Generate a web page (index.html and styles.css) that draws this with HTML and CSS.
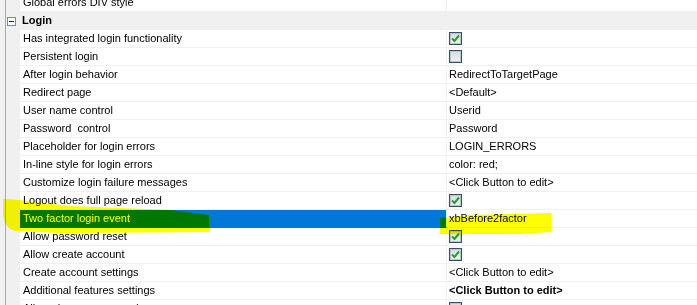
FILE: index.html
```html
<!DOCTYPE html>
<html lang="en">
<head>
  <meta charset="UTF-8">
  <title>Properties - Login</title>
  <link rel="stylesheet" href="styles.css">
</head>
<body>

  <div class="grid">
    <div class="row">
      <div class="gutter"></div>
      <div class="name">Global errors DIV style</div>
      <div class="value"></div>
    </div>

    <div class="row category">
      <div class="gutter"><span class="toggle"></span></div>
      <div class="name">Login</div>
      <div class="value"></div>
    </div>

    <div class="row">
      <div class="gutter"></div>
      <div class="name">Has integrated login functionality</div>
      <div class="value"><span class="check on"></span></div>
    </div>
    <div class="row">
      <div class="gutter"></div>
      <div class="name">Persistent login</div>
      <div class="value"><span class="check"></span></div>
    </div>
    <div class="row">
      <div class="gutter"></div>
      <div class="name">After login behavior</div>
      <div class="value">RedirectToTargetPage</div>
    </div>
    <div class="row">
      <div class="gutter"></div>
      <div class="name">Redirect page</div>
      <div class="value">&lt;Default&gt;</div>
    </div>
    <div class="row">
      <div class="gutter"></div>
      <div class="name">User name control</div>
      <div class="value">Userid</div>
    </div>
    <div class="row">
      <div class="gutter"></div>
      <div class="name">Password&nbsp; control</div>
      <div class="value">Password</div>
    </div>
    <div class="row">
      <div class="gutter"></div>
      <div class="name">Placeholder for login errors</div>
      <div class="value">LOGIN_ERRORS</div>
    </div>
    <div class="row">
      <div class="gutter"></div>
      <div class="name">In-line style for login errors</div>
      <div class="value">color: red;</div>
    </div>
    <div class="row">
      <div class="gutter"></div>
      <div class="name">Customize login failure messages</div>
      <div class="value">&lt;Click Button to edit&gt;</div>
    </div>
    <div class="row">
      <div class="gutter"></div>
      <div class="name">Logout does full page reload</div>
      <div class="value"><span class="check on"></span></div>
    </div>
    <div class="row selected">
      <div class="gutter"></div>
      <div class="name">Two factor login event</div>
      <div class="value">xbBefore2factor</div>
    </div>
    <div class="row">
      <div class="gutter"></div>
      <div class="name">Allow password reset</div>
      <div class="value"><span class="check on"></span></div>
    </div>
    <div class="row">
      <div class="gutter"></div>
      <div class="name">Allow create account</div>
      <div class="value"><span class="check on"></span></div>
    </div>
    <div class="row">
      <div class="gutter"></div>
      <div class="name">Create account settings</div>
      <div class="value">&lt;Click Button to edit&gt;</div>
    </div>
    <div class="row">
      <div class="gutter"></div>
      <div class="name">Additional features settings</div>
      <div class="value bold">&lt;Click Button to edit&gt;</div>
    </div>
    <div class="row">
      <div class="gutter"></div>
      <div class="name">Allow change password</div>
      <div class="value"><span class="check"></span></div>
    </div>
  </div>

  <!-- highlighter marks drawn over the grid -->
  <svg class="marker" width="697" height="305" viewBox="0 0 697 305">
    <path d="M3 199 C20 199 40 203 70 206 L170 210 L209 215 L209 232 L60 233 L15 231 C8 229 4 224 3 214 Z"/>
    <path d="M440 218 L470 215 L551 213 L551 232 L520 234 L440 234 Z"/>
  </svg>

</body>
</html>
```

FILE: styles.css
```css
:root {
  --line: #f0f0f0;
  --gutter-line: #a9a9a9;
  --select: #0078d7;
  --text: #000000;
}

body {
  margin: 0;
  font-family: "Liberation Sans", Arial, sans-serif;
  font-size: 11px;
  color: var(--text);
  background: #ffffff;
  overflow: hidden;
  width: 697px;
  height: 305px;
}

.grid {
  margin-top: -6px;
  background:
    linear-gradient(to right, var(--line) 5px, var(--gutter-line) 5px, var(--gutter-line) 6px, var(--line) 6px) 0 0 / 20px 100% no-repeat;
}

.row {
  display: flex;
  height: 18px;
}

.gutter {
  flex: 0 0 20px;
  display: flex;
  align-items: center;
}

.name,
.value {
  box-sizing: border-box;
  height: 18px;
  line-height: 17px;
  border-bottom: 1px solid var(--line);
  white-space: nowrap;
  overflow: hidden;
}

.name {
  flex: 0 0 427px;
  padding-left: 3px;
  border-right: 1px solid var(--line);
}

.value {
  flex: 1;
  padding-left: 2px;
}

.value.bold {
  font-weight: bold;
}

.category .name,
.category .value {
  background: var(--line);
  font-weight: bold;
  padding-left: 2px;
  border-right: none;
}

.toggle {
  box-sizing: border-box;
  width: 9px;
  height: 9px;
  margin: 1px 0 0 7px;
  border: 1px solid #7a8da3;
  background: #ffffff;
  position: relative;
}

.toggle::after {
  content: "";
  position: absolute;
  left: 1px;
  top: 3px;
  width: 5px;
  height: 1px;
  background: #1c2b3a;
}

.selected .name {
  background: var(--select);
  border-bottom-color: var(--select);
  color: #ffffff;
}

.check {
  display: inline-block;
  box-sizing: border-box;
  width: 13px;
  height: 13px;
  margin-top: 2px;
  vertical-align: top;
  border: 1px solid #33506e;
  box-shadow: inset 0 0 0 1px #b9c4cf;
  background: linear-gradient(#dadada, #f2f2f2);
}

.check.on {
  background:
    url("data:image/svg+xml,%3Csvg xmlns='http://www.w3.org/2000/svg' width='11' height='11'%3E%3Cpath d='M2 5.5 L4.5 8 L9 2.5' fill='none' stroke='%2322a122' stroke-width='2'/%3E%3C/svg%3E") center / 11px 11px no-repeat,
    linear-gradient(#dadada, #f2f2f2);
}

.marker {
  position: absolute;
  top: 0;
  left: 0;
  mix-blend-mode: multiply;
  pointer-events: none;
}

.marker path {
  fill: #ffff00;
}
```
